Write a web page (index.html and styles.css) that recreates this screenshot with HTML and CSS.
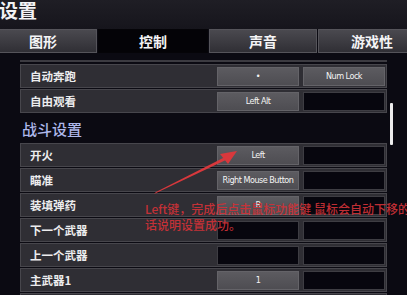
FILE: index.html
```html
<!DOCTYPE html>
<html lang="zh">

<head>
    <meta charset="UTF-8">
    <meta name="viewport" content="width=device-width, initial-scale=1.0">
    <title>设置</title>
    <link rel="stylesheet" href="styles.css">
</head>

<body>
    <div class="screen">
        <div class="title">设置</div>

        <!-- 选项卡 -->
        <div class="tabs">
            <div class="tab">图形</div>
            <div class="tab active">控制</div>
            <div class="tab">声音</div>
            <div class="tab">游戏性</div>
        </div>

        <div class="content">
            <div class="list">
                <div class="row-end"></div>
                <div class="row">
                    <div class="label">自动奔跑</div>
                    <div class="key set">•</div>
                    <div class="key set">Num Lock</div>
                </div>
                <div class="row">
                    <div class="label">自由观看</div>
                    <div class="key set">Left Alt</div>
                    <div class="key"></div>
                </div>

                <div class="heading">战斗设置</div>

                <div class="row">
                    <div class="label">开火</div>
                    <div class="key set">Left</div>
                    <div class="key"></div>
                </div>
                <div class="row">
                    <div class="label">瞄准</div>
                    <div class="key set">Right Mouse Button</div>
                    <div class="key"></div>
                </div>
                <div class="row">
                    <div class="label">装填弹药</div>
                    <div class="key set">R</div>
                    <div class="key"></div>
                </div>
                <div class="row">
                    <div class="label">下一个武器</div>
                    <div class="key"></div>
                    <div class="key"></div>
                </div>
                <div class="row">
                    <div class="label">上一个武器</div>
                    <div class="key"></div>
                    <div class="key"></div>
                </div>
                <div class="row">
                    <div class="label">主武器1</div>
                    <div class="key set">1</div>
                    <div class="key"></div>
                </div>
                <div class="row">
                    <div class="label"></div>
                    <div class="key"></div>
                    <div class="key"></div>
                </div>
            </div>
            <div class="track">
                <div class="thumb"></div>
            </div>
        </div>

        <!-- 红色标注 -->
        <svg class="arrow" width="407" height="295" viewBox="0 0 407 295">
            <polygon points="154,194 156,192 227,156 228,159" fill="#d8383c" />
            <polygon points="237,151 220,154 228,164" fill="#d8383c" />
        </svg>
        <div class="note">
            <div>Left键，完成后点击鼠标功能键 鼠标会自动下移的</div>
            <div>话说明设置成功。</div>
        </div>
    </div>
</body>

</html>
```

FILE: styles.css
```css
body {
    margin: 0;
    background: #0b0a12;
    overflow: hidden;
    font-family: "Noto Sans CJK SC", "Noto Sans", sans-serif;
}

.screen {
    position: relative;
    width: 407px;
    height: 295px;
    overflow: hidden;
    background: #0b0a12;
}

.title {
    height: 29px;
    font-size: 19px;
    font-weight: 700;
    line-height: 20px;
    text-indent: -1px;
    color: #f2f2f4;
    background: linear-gradient(#1f1e25, #16151c);
}

.tabs {
    display: flex;
    gap: 1px;
    height: 24px;
    margin-left: -11px;
    background: #0b0a12;
}

.tab {
    flex: none;
    width: 108px;
    box-sizing: border-box;
    border: 1px solid #55545a;
    background: linear-gradient(#4a494f, #302f35);
    color: #f4f4f6;
    font-size: 14px;
    font-weight: 700;
    line-height: 22px;
    text-align: center;
}

.tab.active {
    width: 110px;
    border-color: #050408;
    background: #040307;
}

.content {
    display: flex;
    margin-left: 20px;
}

.list {
    width: 367px;
    margin-top: 7px;
}

.row-end {
    height: 2px;
    margin-bottom: 2px;
    background: #3c3b41;
}

.row {
    display: flex;
    height: 24px;
    margin-bottom: 1px;
    box-sizing: border-box;
    border: 1px solid #47464c;
    background: #2f2e34;
    padding: 2px 1px 0 0;
}

.label {
    flex: 1;
    padding-left: 9px;
    color: #ececee;
    font-size: 11.5px;
    font-weight: 700;
    line-height: 19px;
}

.key {
    flex: none;
    width: 82px;
    height: 19px;
    box-sizing: border-box;
    margin-left: 4px;
    border: 1px solid #3e3d43;
    background: #07060e;
    color: #f4f4f4;
    font-family: "DejaVu Sans", sans-serif;
    font-stretch: condensed;
    font-size: 9px;
    letter-spacing: -0.5px;
    line-height: 17px;
    text-align: center;
    white-space: nowrap;
}

.label + .key {
    margin-left: 0;
}

.key.set {
    border-color: #646368;
    background: linear-gradient(#5c5b60, #4e4d52);
}

.heading {
    height: 29px;
    box-sizing: border-box;
    padding: 5px 0 0 2px;
    color: #aeb8ea;
    font-size: 15px;
    font-weight: 500;
    line-height: 20px;
}

.track {
    width: 3px;
    margin-left: 3px;
}

.thumb {
    height: 42px;
    margin-top: 50px;
    background: #ececec;
    border-radius: 1px;
}

.arrow {
    position: absolute;
    left: 0;
    top: 0;
}

.note {
    position: absolute;
    left: 145px;
    top: 201px;
    color: #cf3238;
    font-size: 12px;
    font-weight: 500;
    line-height: 16px;
    white-space: nowrap;
    opacity: 0.92;
}
```
